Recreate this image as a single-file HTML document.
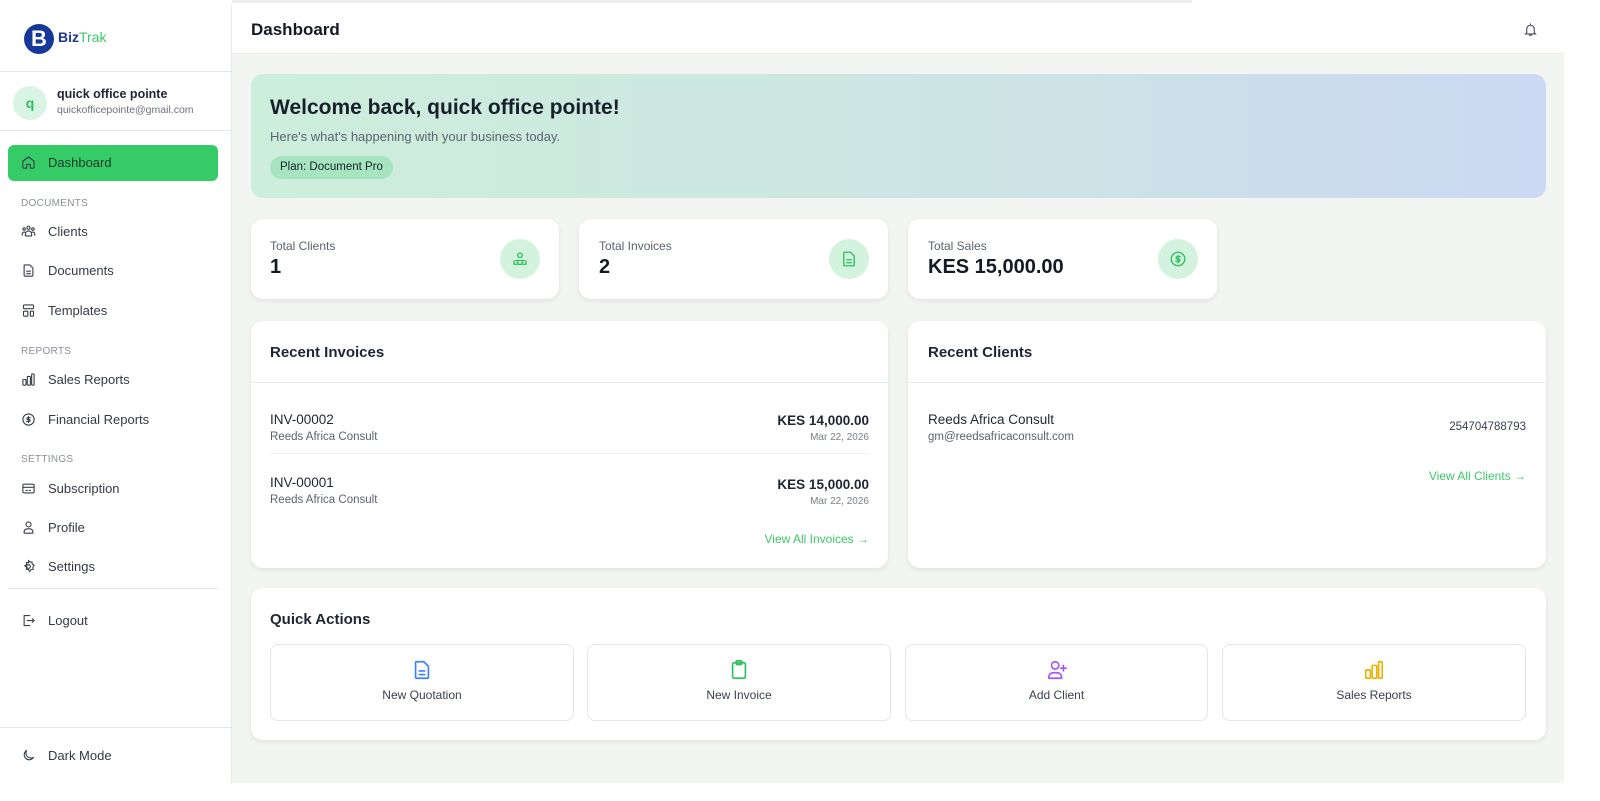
<!DOCTYPE html>
<html><head><meta charset="utf-8"><style>
*{box-sizing:border-box;margin:0;padding:0}
body{width:1600px;height:801px;overflow:hidden;background:#fff;font-family:"Liberation Sans",sans-serif;color:#1f2633;position:relative}
.abs{position:absolute}
#side{left:0;top:5px;width:232px;height:778px;background:#fff;border-right:1px solid #e6e8e7}
#main{left:232px;top:5px;width:1332px;height:778px;background:#f3f5f3}
#hdr{left:232px;top:5px;width:1332px;height:49px;background:#fff;border-bottom:1px solid #eceeed}
.card{position:absolute;background:#fff;border-radius:12px;box-shadow:0 2px 6px rgba(0,0,0,.08)}
.nav{position:absolute;left:21px;font-size:13px;color:#333a44;display:flex;align-items:center;gap:12px}
.nav svg{width:15px;height:15px;fill:none;stroke:#3a414c;stroke-width:1.8;stroke-linecap:round;stroke-linejoin:round}
.sec{position:absolute;left:21px;font-size:10px;color:#8a9097;letter-spacing:.3px}
.lab{font-size:12px;color:#5b626b}
.val{font-size:20px;font-weight:bold;color:#141a24}
.ico{position:absolute;width:40px;height:40px;border-radius:50%;background:#d3f3df;display:flex;align-items:center;justify-content:center}
.ico svg{width:18px;height:18px;fill:none;stroke:#2fbf5e;stroke-width:1.8;stroke-linecap:round;stroke-linejoin:round}
.qa{position:absolute;top:56px;height:77px;border:1px solid #e4e6e8;border-radius:8px;text-align:center;font-size:12px;color:#3a414c}
.qa svg{display:block;margin:14px auto 7px;width:22px;height:22px;fill:none;stroke-width:1.8;stroke-linecap:round;stroke-linejoin:round}
</style></head><body>
<div class="abs" style="left:232px;top:0;width:960px;height:3px;background:#eceeed"></div>
<div id="side" class="abs">
 <div class="abs" style="left:24px;top:19px;width:30px;height:30px;border-radius:50%;background:#15389a;color:#fff;font-weight:bold;font-size:22px;text-align:center;line-height:30px">B</div>
 <div class="abs" style="left:58px;top:24px;font-size:14px;font-weight:bold;color:#1e3a8a">Biz<span style="color:#3cc86a;font-weight:normal">Trak</span></div>
 <div class="abs" style="left:0;top:66px;width:231px;border-top:1px solid #e6e8e7"></div>
 <div class="abs" style="left:13px;top:81px;width:34px;height:34px;border-radius:50%;background:#daf4e3;color:#2fbf5e;font-weight:bold;font-size:14px;text-align:center;line-height:34px">q</div>
 <div class="abs" style="left:57px;top:82px;font-size:12.5px;font-weight:bold;color:#1f2633">quick office pointe</div>
 <div class="abs" style="left:57px;top:99px;font-size:10.5px;color:#6b7078">quickofficepointe@gmail.com</div>
 <div class="abs" style="left:0;top:125px;width:231px;border-top:1px solid #e6e8e7"></div>
 <div class="abs" style="left:8px;top:140px;width:210px;height:36px;border-radius:6px;background:#35cc67"></div>
 <div class="nav" style="top:150px"><svg viewBox="0 0 24 24"><path d="M3 10l9-7 9 7v10a1 1 0 0 1-1 1h-5v-6h-6v6H4a1 1 0 0 1-1-1z"/></svg><span style="color:#1d3a27">Dashboard</span></div>
 <div class="sec" style="top:193px">DOCUMENTS</div>
 <div class="nav" style="top:219px"><svg viewBox="0 0 24 24"><circle cx="12" cy="6" r="2.5"/><circle cx="5" cy="8" r="2"/><circle cx="19" cy="8" r="2"/><path d="M7 19v-3a5 5 0 0 1 10 0v3zM2 18v-2a3 3 0 0 1 4-3M22 18v-2a3 3 0 0 0-4-3"/></svg>Clients</div>
 <div class="nav" style="top:258px"><svg viewBox="0 0 24 24"><path d="M6 3h8l5 5v12a1 1 0 0 1-1 1H6a1 1 0 0 1-1-1V4a1 1 0 0 1 1-1zM9 13h6M9 17h6"/></svg>Documents</div>
 <div class="nav" style="top:298px"><svg viewBox="0 0 24 24"><rect x="4" y="3" width="16" height="6" rx="1"/><rect x="4" y="13" width="7" height="8" rx="1"/><rect x="15" y="13" width="5" height="8" rx="1"/></svg>Templates</div>
 <div class="sec" style="top:341px">REPORTS</div>
 <div class="nav" style="top:367px"><svg viewBox="0 0 24 24"><rect x="3" y="12" width="5" height="9" rx="1"/><rect x="10" y="7" width="5" height="14" rx="1"/><rect x="17" y="3" width="4" height="18" rx="1"/></svg>Sales Reports</div>
 <div class="nav" style="top:407px"><svg viewBox="0 0 24 24"><circle cx="12" cy="12" r="9"/><path d="M15 9h-4a1.5 1.5 0 0 0 0 3h2a1.5 1.5 0 0 1 0 3H9M12 7v10"/></svg>Financial Reports</div>
 <div class="sec" style="top:449px">SETTINGS</div>
 <div class="nav" style="top:476px"><svg viewBox="0 0 24 24"><rect x="3" y="5" width="18" height="14" rx="2"/><path d="M3 10h18M8 15h2M13 15h2"/></svg>Subscription</div>
 <div class="nav" style="top:515px"><svg viewBox="0 0 24 24"><circle cx="12" cy="7" r="4"/><path d="M5 21v-2a5 5 0 0 1 5-5h4a5 5 0 0 1 5 5v2z"/></svg>Profile</div>
 <div class="nav" style="top:554px"><svg viewBox="0 0 24 24"><circle cx="12" cy="12" r="3"/><path d="M12 2l2 3 3.5-.5.5 3.5 3 2-2 3 .5 3.5-3.5.5-2 3-2-3-3.5-.5.5-3.5-3-2 3-2-.5-3.5 3.5.5z"/></svg>Settings</div>
 <div class="abs" style="left:8px;top:583px;width:210px;border-top:1px solid #e3e5e6"></div>
 <div class="nav" style="top:608px"><svg viewBox="0 0 24 24"><path d="M14 4H5v16h9M10 12h11M18 9l3 3-3 3"/></svg>Logout</div>
 <div class="abs" style="left:0;top:722px;width:231px;border-top:1px solid #e6e8e7"></div>
 <div class="nav" style="top:743px"><svg viewBox="0 0 24 24"><path d="M20 15A8 8 0 0 1 9 4a8 8 0 1 0 11 11z"/></svg>Dark Mode</div>
</div>
<div id="main" class="abs"></div>
<div id="hdr" class="abs">
 <div class="abs" style="left:19px;top:15px;font-size:17px;font-weight:bold;color:#141a24">Dashboard</div>
 <svg class="abs" style="left:1291px;top:17px" width="15" height="15" viewBox="0 0 24 24" fill="none" stroke="#4a505a" stroke-width="1.8" stroke-linecap="round"><path d="M6 17V11a6 6 0 0 1 12 0v6l2 2H4zM10 21h4M12 3v2"/></svg>
</div>
<div class="abs" style="left:251px;top:74px;width:1295px;height:124px;border-radius:12px;background:linear-gradient(90deg,#cdeedb,#cde4e4 55%,#cbd9f2)">
 <div class="abs" style="left:19px;top:22px;font-size:21px;font-weight:bold;color:#17202b">Welcome back, quick office pointe!</div>
 <div class="abs" style="left:19px;top:55px;font-size:13px;color:#5a6570">Here's what's happening with your business today.</div>
 <div class="abs" style="left:19px;top:82px;height:23px;padding:0 10px;border-radius:12px;background:#a6e5bf;font-size:11.5px;line-height:23px;color:#17202b">Plan: Document Pro</div>
</div>
<div class="card" style="left:251px;top:219px;width:308px;height:80px"><div class="abs lab" style="left:19px;top:20px">Total Clients</div><div class="abs val" style="left:19px;top:37px">1</div><div class="ico" style="left:249px;top:20px"><svg viewBox="0 0 24 24"><circle cx="12" cy="7" r="3"/><path d="M4 19v-2a3 3 0 0 1 3-3h10a3 3 0 0 1 3 3v2zM9 14v5M15 14v5"/></svg></div></div>
<div class="card" style="left:579px;top:219px;width:309px;height:80px"><div class="abs lab" style="left:20px;top:20px">Total Invoices</div><div class="abs val" style="left:20px;top:37px">2</div><div class="ico" style="left:250px;top:20px"><svg viewBox="0 0 24 24"><path d="M6 3h8l5 5v12a1 1 0 0 1-1 1H6a1 1 0 0 1-1-1V4a1 1 0 0 1 1-1zM9 13h6M9 17h6"/></svg></div></div>
<div class="card" style="left:908px;top:219px;width:309px;height:80px"><div class="abs lab" style="left:20px;top:20px">Total Sales</div><div class="abs val" style="left:20px;top:37px">KES 15,000.00</div><div class="ico" style="left:250px;top:20px"><svg viewBox="0 0 24 24"><circle cx="12" cy="12" r="9"/><path d="M15 9h-4a1.5 1.5 0 0 0 0 3h2a1.5 1.5 0 0 1 0 3H9M12 7v10"/></svg></div></div>
<div class="card" style="left:251px;top:321px;width:637px;height:247px">
 <div class="abs" style="left:19px;top:23px;font-size:15px;font-weight:bold">Recent Invoices</div>
 <div class="abs" style="left:0;top:61px;width:637px;border-top:1px solid #e8eaea"></div>
 <div class="abs" style="left:19px;top:91px;font-size:13.5px">INV-00002</div><div class="abs" style="left:19px;top:110px;font-size:11.5px;color:#5b626b">Reeds Africa Consult</div>
 <div class="abs" style="right:19px;top:92px;font-size:13.5px;font-weight:bold;text-align:right">KES 14,000.00</div><div class="abs" style="right:19px;top:111px;font-size:10px;color:#7a8087">Mar 22, 2026</div>
 <div class="abs" style="left:19px;top:132px;width:599px;border-top:1px solid #eef0f0"></div>
 <div class="abs" style="left:19px;top:154px;font-size:13.5px">INV-00001</div><div class="abs" style="left:19px;top:173px;font-size:11.5px;color:#5b626b">Reeds Africa Consult</div>
 <div class="abs" style="right:19px;top:156px;font-size:13.5px;font-weight:bold">KES 15,000.00</div><div class="abs" style="right:19px;top:175px;font-size:10px;color:#7a8087">Mar 22, 2026</div>
 <div class="abs" style="right:19px;top:211px;font-size:12px;color:#3cc86a">View All Invoices →</div>
</div>
<div class="card" style="left:908px;top:321px;width:638px;height:247px">
 <div class="abs" style="left:20px;top:23px;font-size:15px;font-weight:bold">Recent Clients</div>
 <div class="abs" style="left:0;top:61px;width:638px;border-top:1px solid #e8eaea"></div>
 <div class="abs" style="left:20px;top:91px;font-size:13.5px">Reeds Africa Consult</div><div class="abs" style="left:20px;top:110px;font-size:11.5px;color:#5b626b">gm@reedsafricaconsult.com</div>
 <div class="abs" style="right:20px;top:100px;font-size:11.5px;color:#3a414c">254704788793</div>
 <div class="abs" style="right:20px;top:148px;font-size:12px;color:#3cc86a">View All Clients →</div>
</div>
<div class="card" style="left:251px;top:588px;width:1295px;height:152px">
 <div class="abs" style="left:19px;top:23px;font-size:15px;font-weight:bold">Quick Actions</div>
 <div class="qa" style="left:19px;width:304px"><svg viewBox="0 0 24 24" stroke="#3b82f6"><path d="M6 3h8l5 5v12a1 1 0 0 1-1 1H6a1 1 0 0 1-1-1V4a1 1 0 0 1 1-1zM9 13h6M9 17h6"/></svg>New Quotation</div>
 <div class="qa" style="left:336px;width:304px"><svg viewBox="0 0 24 24" stroke="#2fbf5e"><rect x="5" y="4" width="14" height="17" rx="2"/><rect x="9" y="2" width="6" height="4" rx="1"/></svg>New Invoice</div>
 <div class="qa" style="left:654px;width:303px"><svg viewBox="0 0 24 24" stroke="#a855f7"><circle cx="10" cy="7" r="4"/><path d="M3 21v-1a5 5 0 0 1 5-5h4a5 5 0 0 1 5 5v1zM19 7v6M16 10h6"/></svg>Add Client</div>
 <div class="qa" style="left:971px;width:304px"><svg viewBox="0 0 24 24" stroke="#eab308"><rect x="3" y="12" width="5" height="9" rx="1"/><rect x="10" y="7" width="5" height="14" rx="1"/><rect x="17" y="3" width="4" height="18" rx="1"/></svg>Sales Reports</div>
</div>
</body></html>
